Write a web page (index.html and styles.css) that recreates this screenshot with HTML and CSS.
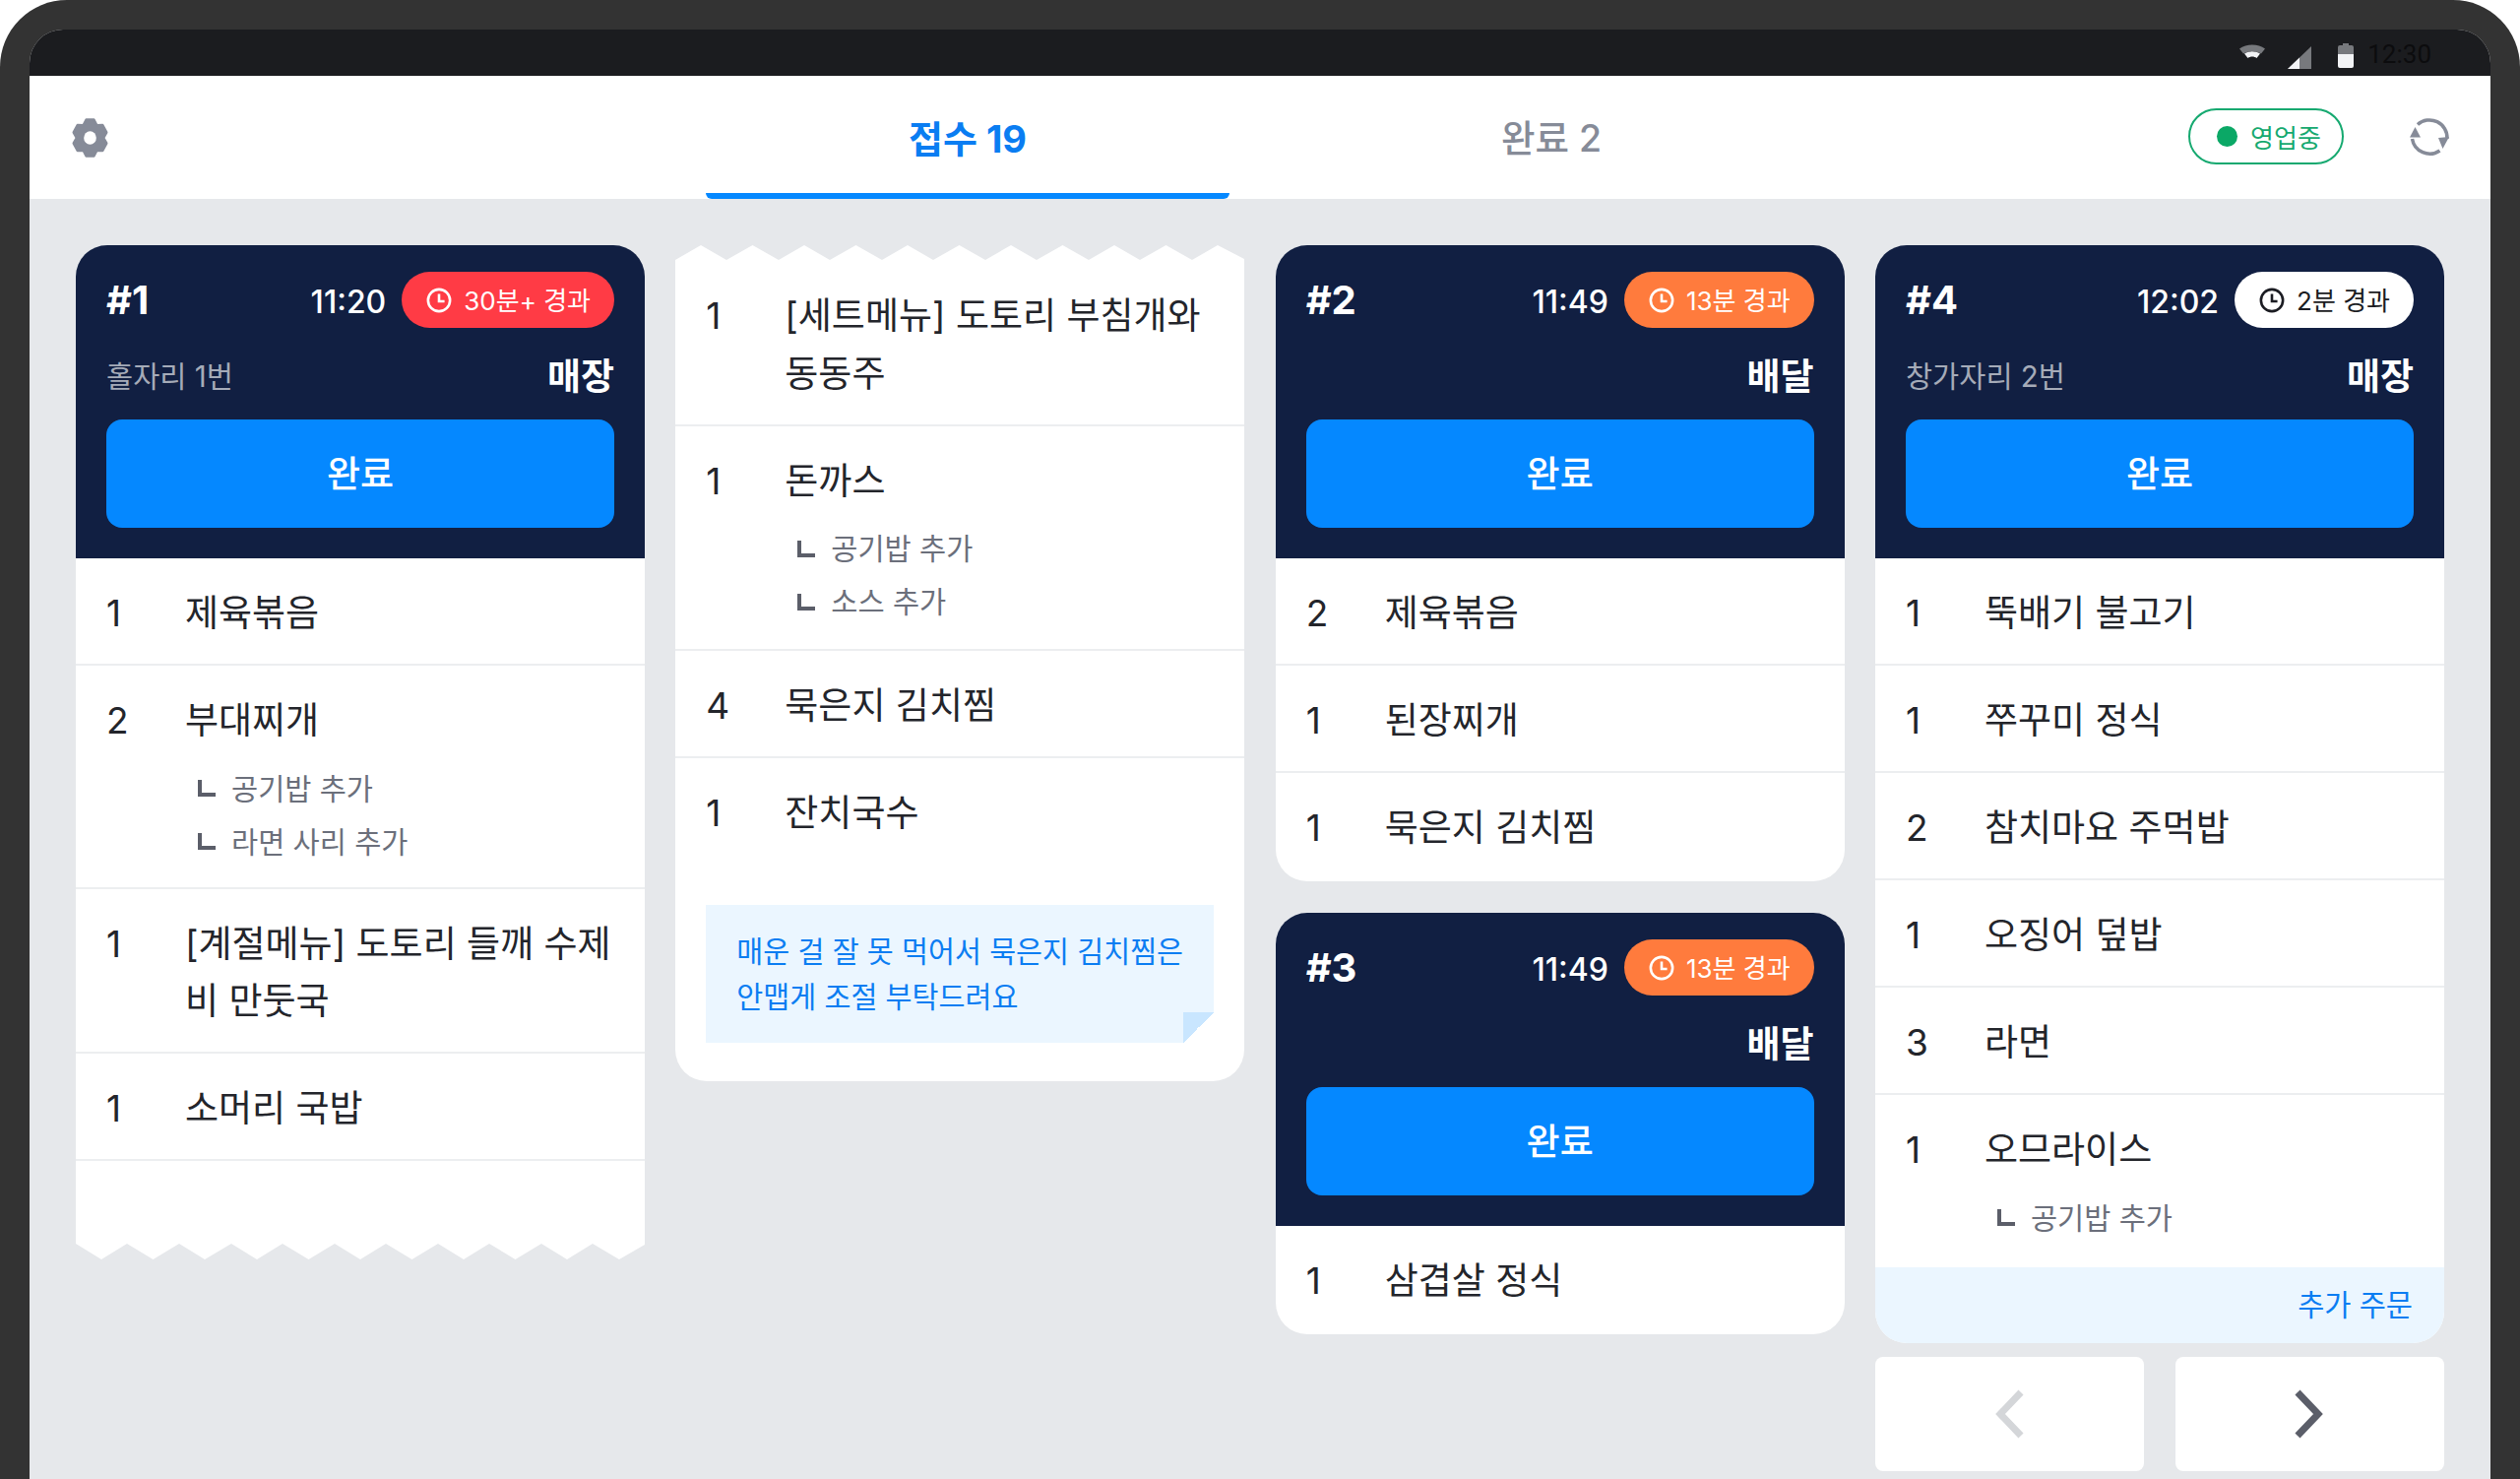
FILE: index.html
```html
<!DOCTYPE html>
<html lang="ko">
<head>
<meta charset="utf-8">
<title>주문 접수</title>
<link rel="stylesheet" href="styles.css">
</head>
<body>
<div class="frame">
  <div class="screen">
    <div class="statusbar">
      <svg class="st-wifi" width="26" height="14" viewBox="0 0 26 14"><path d="M0 4.500C7-1 19-1 26 4.500L22 9.500C16.500 6 9.500 6 4 9.500Z" fill="#77797d"/><path d="M5 9.500C10 6.500 16 6.500 21 9.500L17.500 14C15 12 11 12 8.500 14Z" fill="#f2f3f5"/></svg>
      <svg class="st-signal" width="24" height="23" viewBox="0 0 24 23"><path d="M24 0V23H0Z" fill="#77797d"/><path d="M12 11.500V23H0Z" fill="#f2f3f5"/></svg>
      <svg class="st-batt" width="16" height="25" viewBox="0 0 16 25"><path d="M5 0H11V2H14Q16 2 16 4V11H0V4Q0 2 2 2H5Z" fill="#77797d"/><path d="M0 11H16V23Q16 25 14 25H2Q0 25 0 23Z" fill="#f2f3f5"/></svg>
      <span class="st-time">12:30</span>
    </div>

    <div class="topbar">
      <div class="top-left">
        <svg width="37" height="40" viewBox="-19 -19 38 38" preserveAspectRatio="none"><polygon fill="#868b98" stroke="#868b98" stroke-width="2.500" stroke-linejoin="round" points="-4.050,-17.540 4.050,-17.540 7,-12.120 13.160,-12.280 17.210,-5.260 14,0 17.210,5.260 13.160,12.280 7,12.120 4.050,17.540 -4.050,17.540 -7,12.120 -13.160,12.280 -17.210,5.260 -14,0 -17.210,-5.260 -13.160,-12.280 -7,-12.120"/><circle cx="0" cy="0" r="6.500" fill="#fff"/></svg>
      </div>
      <div class="tabs">
        <div class="tab active">접수 19</div>
        <div class="tab">완료 2</div>
      </div>
      <div class="top-right">
        <div class="open-pill"><i class="dot"></i>영업중</div>
        <svg width="42" height="42" viewBox="12 12 42 42" fill="none"><path d="M21 20.500A18 18 0 0 1 51 35" stroke="#868b98" stroke-width="3.500"/><path d="M43.500 47A18 18 0 0 1 15.500 35" stroke="#868b98" stroke-width="3.500"/><path d="M42 34L53 33L46.500 45Z" fill="#868b98"/><path d="M13 33.500H24L18.500 23Z" fill="#868b98"/></svg>
      </div>
    </div>

    <div class="board">
      <div class="col">
        <div class="ticket cut">
          <div class="tk-head">
            <div class="tk-row">
              <span class="tk-no">#1</span>
              <span class="tk-time">11:20</span>
              <span class="badge red"><svg class="clock" viewBox="0 0 28 28"><circle cx="14" cy="14" r="12"/><path d="M14 7V15H20"/></svg>30분+ 경과</span>
            </div>
            <div class="tk-row second"><span class="tk-seat">홀자리 1번</span><span class="tk-type">매장</span></div>
            <div class="done-btn">완료</div>
          </div>
          <div class="item"><span class="qty">1</span><div class="body"><div class="name">제육볶음</div></div></div>
          <div class="item"><span class="qty">2</span><div class="body"><div class="name">부대찌개</div>
            <ul class="subs"><li><i class="ell"></i>공기밥 추가</li><li><i class="ell"></i>라면 사리 추가</li></ul></div></div>
          <div class="item"><span class="qty">1</span><div class="body"><div class="name">[계절메뉴] 도토리 들깨 수제비 만둣국</div></div></div>
          <div class="item"><span class="qty">1</span><div class="body"><div class="name">소머리 국밥</div></div></div>
          <div class="blank"></div>
          <svg class="zig" viewBox="0 0 578 16" preserveAspectRatio="none"><polygon fill="#fff" points="0,0 578,0 578,1 552,16 525,0 499,16 473,0 446.500,16 420,0 394,16 368,0 341.500,16 315,0 289,16 263,0 236.500,16 210,0 184,16 158,0 131,16 105,0 78.500,16 52,0 26,16 0,0"/></svg>
        </div>
      </div>

      <div class="col">
        <div class="ticket cont">
          <svg class="zig" viewBox="0 0 578 16" preserveAspectRatio="none"><polygon fill="#fff" points="0,16 578,16 578,14 551,0 525,15 498.500,0 472,15 446,0 420,15 393.500,0 367,15 341,0 315,15 288.500,0 262,15 236,0 210,15 183.500,0 157,15 131,0 105,15 78.500,0 52,15 26,0 0,15"/></svg>
          <div class="item"><span class="qty">1</span><div class="body"><div class="name">[세트메뉴] 도토리 부침개와 동동주</div></div></div>
          <div class="item"><span class="qty">1</span><div class="body"><div class="name">돈까스</div>
            <ul class="subs"><li><i class="ell"></i>공기밥 추가</li><li><i class="ell"></i>소스 추가</li></ul></div></div>
          <div class="item"><span class="qty">4</span><div class="body"><div class="name">묵은지 김치찜</div></div></div>
          <div class="item plain"><span class="qty">1</span><div class="body"><div class="name">잔치국수</div></div></div>
          <div class="memo-wrap">
            <div class="memo">매운 걸 잘 못 먹어서 묵은지 김치찜은<br>안맵게 조절 부탁드려요</div>
          </div>
        </div>
      </div>

      <div class="col">
        <div class="ticket">
          <div class="tk-head">
            <div class="tk-row">
              <span class="tk-no">#2</span>
              <span class="tk-time">11:49</span>
              <span class="badge orange"><svg class="clock" viewBox="0 0 28 28"><circle cx="14" cy="14" r="12"/><path d="M14 7V15H20"/></svg>13분 경과</span>
            </div>
            <div class="tk-row second"><span class="tk-seat"></span><span class="tk-type">배달</span></div>
            <div class="done-btn">완료</div>
          </div>
          <div class="item"><span class="qty">2</span><div class="body"><div class="name">제육볶음</div></div></div>
          <div class="item"><span class="qty">1</span><div class="body"><div class="name">된장찌개</div></div></div>
          <div class="item last"><span class="qty">1</span><div class="body"><div class="name">묵은지 김치찜</div></div></div>
        </div>
        <div class="ticket">
          <div class="tk-head">
            <div class="tk-row">
              <span class="tk-no">#3</span>
              <span class="tk-time">11:49</span>
              <span class="badge orange"><svg class="clock" viewBox="0 0 28 28"><circle cx="14" cy="14" r="12"/><path d="M14 7V15H20"/></svg>13분 경과</span>
            </div>
            <div class="tk-row second"><span class="tk-seat"></span><span class="tk-type">배달</span></div>
            <div class="done-btn">완료</div>
          </div>
          <div class="item last"><span class="qty">1</span><div class="body"><div class="name">삼겹살 정식</div></div></div>
        </div>
      </div>

      <div class="col">
        <div class="ticket">
          <div class="tk-head">
            <div class="tk-row">
              <span class="tk-no">#4</span>
              <span class="tk-time">12:02</span>
              <span class="badge white"><svg class="clock" viewBox="0 0 28 28"><circle cx="14" cy="14" r="12"/><path d="M14 7V15H20"/></svg>2분 경과</span>
            </div>
            <div class="tk-row second"><span class="tk-seat">창가자리 2번</span><span class="tk-type">매장</span></div>
            <div class="done-btn">완료</div>
          </div>
          <div class="item"><span class="qty">1</span><div class="body"><div class="name">뚝배기 불고기</div></div></div>
          <div class="item"><span class="qty">1</span><div class="body"><div class="name">쭈꾸미 정식</div></div></div>
          <div class="item"><span class="qty">2</span><div class="body"><div class="name">참치마요 주먹밥</div></div></div>
          <div class="item"><span class="qty">1</span><div class="body"><div class="name">오징어 덮밥</div></div></div>
          <div class="item"><span class="qty">3</span><div class="body"><div class="name">라면</div></div></div>
          <div class="item last"><span class="qty">1</span><div class="body"><div class="name">오므라이스</div>
            <ul class="subs"><li><i class="ell"></i>공기밥 추가</li></ul></div></div>
          <div class="extra">추가 주문</div>
        </div>
        <div class="pager">
          <div class="page-btn"><svg width="30" height="50" viewBox="0 0 30 50" fill="none"><path d="M27 3L6 25L27 47" stroke="#d4d6d9" stroke-width="7"/></svg></div>
          <div class="page-btn"><svg width="30" height="50" viewBox="0 0 30 50" fill="none"><path d="M3 3L24 25L3 47" stroke="#5b5e69" stroke-width="7"/></svg></div>
        </div>
      </div>
    </div>
  </div>
</div>
</body>
</html>
```

FILE: styles.css
```css
*{
  margin: 0;
  padding: 0;
  box-sizing: border-box;
}
html,body{
  width: 2560px;
  height: 1502px;
  overflow: hidden;
  background: #fff;
}
body{
  font-family: Inter, "Noto Sans CJK KR", sans-serif;
  color: #23252b;
}
.frame{
  height: 1502px;
  padding: 30px 30px 0;
  background: #333;
  border-radius: 68px 68px 0 0;
}
.screen{
  height: 100%;
  display: flex;
  flex-direction: column;
  background: #e6e8eb;
  border-radius: 34px 34px 0 0;
  overflow: hidden;
}

/* status bar */
.statusbar{
  height: 47px;
  flex: none;
  display: flex;
  align-items: center;
  justify-content: flex-end;
  padding-right: 60px;
  background: #1b1c1f;
}
.st-wifi{
  margin-right: 23px;
  margin-top: -3px;
}
.st-signal{
  margin-right: 27px;
  margin-top: 9px;
}
.st-batt{
  margin-right: 14px;
  margin-top: 5px;
}
.st-time{
  font-family: Roboto, sans-serif;
  font-size: 26px;
  line-height: 30px;
  color: #0c0c0e;
  margin-top: 3px;
}

/* top tabs */
.topbar{
  height: 125px;
  flex: none;
  display: flex;
  background: #fff;
}
.top-left{
  width: 687px;
  padding: 43px 0 0 43px;
}
.tabs{
  display: flex;
  gap: 61px;
}
.tab{
  width: 532px;
  text-align: center;
  font-size: 37.500px;
  line-height: 128px;
  font-weight: 500;
  color: #868b98;
}
.tab.active{
  color: #0a7df2;
  font-size: 38px;
  font-weight: 700;
  border-bottom: 6px solid #0588ff;
  border-radius: 0 0 6px 6px;
}
.top-right{
  margin-left: auto;
  display: flex;
  align-items: center;
  gap: 66px;
  padding: 0 41px 2px 0;
}
.open-pill{
  width: 158px;
  height: 57px;
  display: flex;
  align-items: center;
  justify-content: center;
  gap: 13px;
  padding-left: 6px;
  border: 2px solid #16a970;
  border-radius: 29px;
  font-size: 26px;
  color: #16a970;
}
.dot{
  width: 21px;
  height: 21px;
  border-radius: 50%;
  background: #0ba866;
}

/* columns */
.board{
  flex: 1;
  display: grid;
  grid-template-columns: repeat(4, 578px);
  justify-content: space-between;
  padding: 47px 47px 0;
}
.col{
  display: flex;
  flex-direction: column;
  gap: 32px;
}
.ticket{
  background: #fff;
  border-radius: 32px;
  overflow: hidden;
}
.ticket.cut{
  background: transparent;
  border-radius: 32px 32px 0 0;
}
.ticket.cut .item,.ticket.cut .blank{
  background: #fff;
}
.ticket.cont{
  background: transparent;
  border-radius: 0 0 32px 32px;
}
.ticket.cont .item{
  background: #fff;
}
.zig{
  display: block;
  width: 100%;
  height: 16px;
}
.blank{
  height: 84px;
}
.tk-head{
  height: 318px;
  padding: 27px 31px 0;
  background: #111f42;
}
.tk-row{
  display: flex;
  align-items: center;
  height: 57px;
  color: #fff;
}
.tk-row.second{
  margin-top: 18px;
  justify-content: space-between;
}
.tk-no{
  font-size: 40px;
  font-weight: 700;
  margin-right: auto;
}
.tk-time{
  font-size: 32px;
  font-weight: 500;
  margin: 3px 16px 0 0;
}
.badge{
  height: 57px;
  display: flex;
  align-items: center;
  gap: 12px;
  padding: 0 24px 3px 25px;
  border-radius: 29px;
  font-size: 26px;
  color: #fff;
}
.badge.red{
  background: #ff3b45;
}
.badge.orange{
  background: #ff7b3d;
}
.badge.white{
  background: #fff;
  color: #1b1c22;
}
.clock{
  width: 26px;
  height: 26px;
  margin-top: 3px;
  fill: none;
  stroke: currentColor;
  stroke-width: 2.800;
}
.tk-seat{
  font-size: 29.500px;
  color: #a5abb8;
}
.tk-type{
  font-size: 37px;
  font-weight: 700;
}
.done-btn{
  margin-top: 18px;
  height: 110px;
  line-height: 112px;
  text-align: center;
  background: #0588ff;
  border-radius: 16px;
  font-size: 37px;
  font-weight: 500;
  color: #fff;
}

/* order rows */
.item{
  display: flex;
  padding: 27px 31px 21.500px;
  border-bottom: 2px solid #eceef0;
  font-size: 37px;
  line-height: 58.500px;
}
.item.last{
  border-bottom: 0;
  padding-bottom: 24.500px;
}
.item.plain{
  border-bottom: 0;
  padding-bottom: 0;
}
.qty{
  width: 80px;
  flex: none;
}
.body{
  flex: 1;
}
.subs{
  list-style: none;
  margin: 12px 0 -2.500px 13px;
  font-size: 29.500px;
  color: #6b6f7b;
}
.cont .subs{
  margin-bottom: -0.500px;
}
.last .subs{
  margin-bottom: -1.500px;
}
.subs li{
  display: flex;
  align-items: center;
  height: 54px;
  line-height: 54px;
}
.ell{
  width: 18px;
  height: 17px;
  margin-right: 16px;
  border-left: 4px solid #5b5e69;
  border-bottom: 4px solid #5b5e69;
}
.memo-wrap{
  padding: 63px 31px 39px;
  background: #fff;
}
.memo{
  position: relative;
  padding: 25px 0 23px 31px;
  background: #ebf6ff;
  font-size: 29.300px;
  line-height: 46px;
  color: #0a7df2;
  white-space: nowrap;
}
.memo::after{
  content: "";
  position: absolute;
  right: 0;
  bottom: 0;
  width: 31px;
  height: 31px;
  background: linear-gradient(to bottom right, #c9e6ff 50%, #fff 50%);
}
.extra{
  height: 77px;
  line-height: 77px;
  padding-right: 32px;
  text-align: right;
  background: #ebf6ff;
  font-size: 29.500px;
  color: #0a7df2;
}
.pager{
  margin-top: -18px;
  display: flex;
  gap: 32px;
}
.page-btn{
  width: 273px;
  height: 116px;
  display: flex;
  align-items: center;
  justify-content: center;
  background: #fff;
  border-radius: 8px;
}
```
